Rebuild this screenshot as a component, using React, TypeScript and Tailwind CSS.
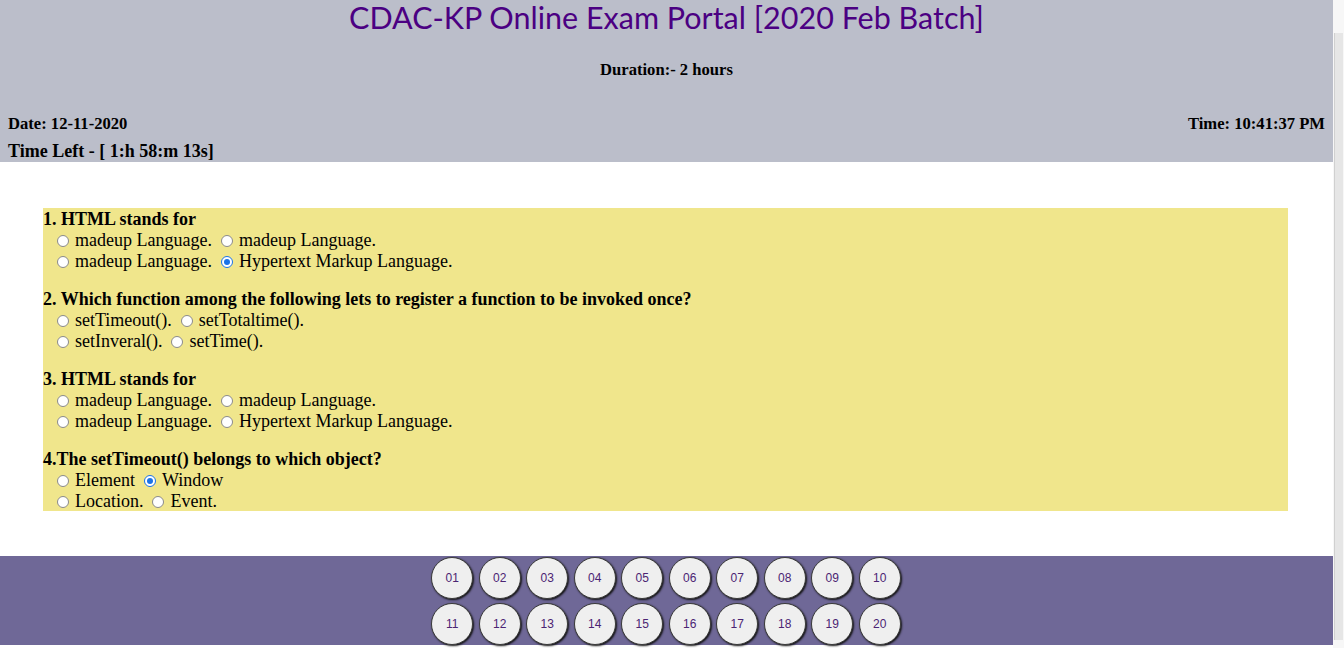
import { FC } from "react";

type Question = {
  title: string;
  options: string[];
  checked: number;
};

const questions: Question[] = [
  {
    title: "1. HTML stands for",
    options: ["madeup Language.", "madeup Language.", "madeup Language.", "Hypertext Markup Language."],
    checked: 3,
  },
  {
    title: "2. Which function among the following lets to register a function to be invoked once?",
    options: ["setTimeout().", "setTotaltime().", "setInveral().", "setTime()."],
    checked: -1,
  },
  {
    title: "3. HTML stands for",
    options: ["madeup Language.", "madeup Language.", "madeup Language.", "Hypertext Markup Language."],
    checked: -1,
  },
  {
    title: "4.The setTimeout() belongs to which object?",
    options: ["Element", "Window", "Location.", "Event."],
    checked: 1,
  },
];

const Radio: FC<{ on: boolean }> = ({ on }) => (
  <span
    className={
      on
        ? "inline-flex w-[12px] h-[12px] rounded-full border border-[#1a73e8] bg-white items-center justify-center mr-[6px]"
        : "inline-flex w-[12px] h-[12px] rounded-full border border-[#8a8a8a] bg-white mr-[6px]"
    }
  >
    {on && <span className="w-[6px] h-[6px] rounded-full bg-[#1a73e8]"></span>}
  </span>
);

const Option: FC<{ label: string; on: boolean }> = ({ label, on }) => (
  <span className="inline-flex items-center mr-[9px]">
    <Radio on={on} />
    {label}
  </span>
);

const QuestionBlock: FC<{ q: Question; idx: number }> = ({ q, idx }) => (
  <div className={idx > 0 ? "mt-[17px]" : ""}>
    <div className="font-bold leading-[21px]">{q.title}</div>
    <div className="pl-[14px] leading-[21px]">
      <div className="flex items-center">
        <Option label={q.options[0]} on={q.checked === 0} />
        <Option label={q.options[1]} on={q.checked === 1} />
      </div>
      <div className="flex items-center">
        <Option label={q.options[2]} on={q.checked === 2} />
        <Option label={q.options[3]} on={q.checked === 3} />
      </div>
    </div>
  </div>
);

const nums = Array.from({ length: 20 }, (_, i) => String(i + 1).padStart(2, "0"));

const App: FC = () => {
  return (
    <div className="flex w-[1344px] h-[648px] overflow-hidden bg-white">
      <div
        className="w-[1333px] text-black text-[16.6px]"
        style={{ fontFamily: '"Liberation Serif", "Times New Roman", serif' }}
      >
        {/* Header */}
        <div className="bg-[#bbbeca] h-[162px] px-[8px]">
          <h1
            className="text-center text-[#4b0082] text-[30.5px] leading-[34px]"
            style={{ fontFamily: 'Lato, "Open Sans", sans-serif' }}
          >
            CDAC-KP Online Exam Portal [2020 Feb Batch]
          </h1>
          <div className="text-center font-bold leading-[21px] mt-[25px]">Duration:- 2 hours</div>
          <div className="flex justify-between font-bold leading-[21px] mt-[33px]">
            <span>Date: 12-11-2020</span>
            <span>Time: 10:41:37 PM</span>
          </div>
          <div className="font-bold text-[18px] leading-[24px] mt-[5px]">Time Left - [ 1:h 58:m 13s]</div>
        </div>

        {/* Questions */}
        <div className="mt-[46px] ml-[43px] mr-[45px] bg-[#f0e68c] h-[303px] pt-[1px] text-[18px]">
          {questions.map((q, i) => (
            <QuestionBlock key={i} q={q} idx={i} />
          ))}
        </div>

        {/* Question navigator */}
        <div className="mt-[45px] bg-[#6f6897] h-[89px] pt-[1px] flex justify-center">
          <div className="grid grid-cols-10 gap-x-[5.5px] gap-y-[3px] -ml-[1px]">
            {nums.map((n) => (
              <div
                key={n}
                className="w-[42px] h-[42px] rounded-full bg-[#efefef] border border-[#3a3a3a] shadow-[1px_1px_2px_#111] flex items-center justify-center text-[12px] text-[#4b2473]"
                style={{ fontFamily: '"Liberation Sans", Arial, sans-serif' }}
              >
                {n}
              </div>
            ))}
          </div>
        </div>
      </div>

      {/* Scrollbar */}
      <div className="w-[11px] h-[648px] bg-[#f7f7f7] pt-[33px] pb-[8px] pl-[1px]">
        <div className="w-[9px] h-full bg-[#e6e6e6] border-l border-[#d0d0d0]"></div>
      </div>
    </div>
  );
};

export default App;
